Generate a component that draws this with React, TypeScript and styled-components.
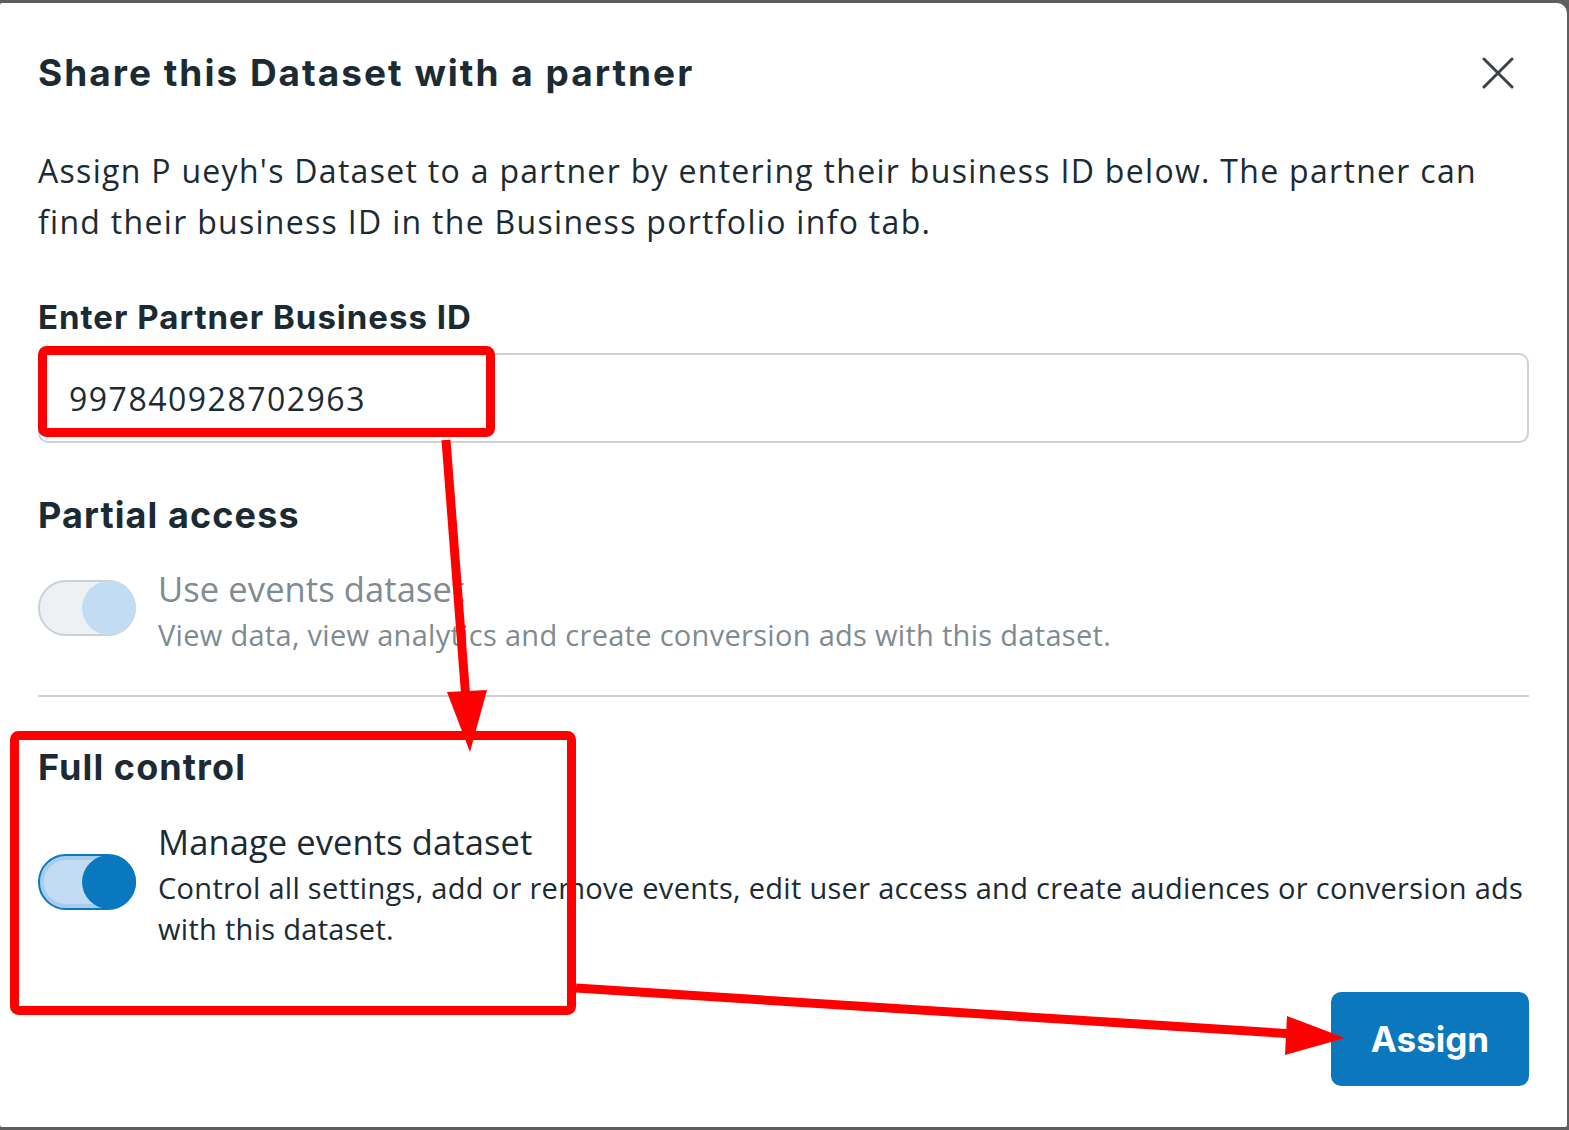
import styled, { createGlobalStyle } from "styled-components";

const GlobalStyle = createGlobalStyle`
    html, body {
        margin: 0;
        padding: 0;
        background: #4a4a4a;
    }
    * {
        box-sizing: border-box;
    }
`;

const Backdrop = styled.div`
    width: 1569px;
    height: 1130px;
    padding-top: 3px;
    background: #5e5e5e;
    overflow: hidden;
`;

const Modal = styled.div`
    position: relative;
    width: 1567px;
    height: 1124px;
    background: #ffffff;
    border-radius: 2px 10px 2px 2px;
    padding: 48px 38px 0 38px;
    color: #1c2b33;
    font-family: "Open Sans", "Noto Sans", sans-serif;
`;

const Header = styled.div`
    display: flex;
    align-items: center;
    justify-content: space-between;
    height: 44px;
`;

const Title = styled.h1`
    margin: 0;
    font-family: Inter, Roboto, sans-serif;
    font-weight: 700;
    font-size: 37px;
    line-height: 44px;
    letter-spacing: 2px;
`;

const CloseButton = styled.button`
    display: flex;
    align-items: center;
    justify-content: center;
    width: 48px;
    height: 48px;
    margin-right: 7px;
    padding: 0;
    border: none;
    background: none;
`;

const Intro = styled.p`
    margin: 50px 0 0;
    font-size: 32px;
    line-height: 51px;
    letter-spacing: 1.3px;
`;

const Label = styled.div`
    margin-top: 48px;
    font-family: Inter, Roboto, sans-serif;
    font-weight: 700;
    font-size: 33px;
    line-height: 44px;
    letter-spacing: 1px;
`;

const Input = styled.div`
    margin-top: 14px;
    height: 90px;
    display: flex;
    align-items: center;
    padding-left: 29px;
    border: 2px solid #cbd2d9;
    border-radius: 10px;
    font-size: 32px;
    letter-spacing: 1.5px;
`;

const SectionTitle = styled.h2<{ $gap: number }>`
    margin: ${(p) => p.$gap}px 0 0;
    font-family: Inter, Roboto, sans-serif;
    font-weight: 700;
    font-size: 36px;
    line-height: 44px;
    letter-spacing: 1.1px;
`;

const OptionRow = styled.div<{ $gap: number }>`
    display: flex;
    align-items: center;
    gap: 22px;
    margin-top: ${(p) => p.$gap}px;
`;

const Track = styled.div<{ $on: boolean }>`
    flex: none;
    display: flex;
    justify-content: flex-end;
    align-items: center;
    width: 98px;
    height: 56px;
    border-radius: 28px;
    border: 2px solid ${(p) => (p.$on ? "#0a78be" : "#ccd0d5")};
    background: ${(p) => (p.$on ? "#c3dcf4" : "#eef1f4")};
    box-shadow: ${(p) => (p.$on ? "inset 0 0 0 4px #a7ccee" : "none")};
    margin-top: -6px;
`;

const Knob = styled.div<{ $on: boolean }>`
    width: 54px;
    height: 54px;
    margin-right: -2px;
    border-radius: 50%;
    background: ${(p) => (p.$on ? "#0a78be" : "#c2dcf4")};
`;

const OptionText = styled.div<{ $muted: boolean }>`
    color: ${(p) => (p.$muted ? "#7f8a91" : "#1c2b33")};
`;

const OptionName = styled.div`
    font-size: 34.5px;
    line-height: 44px;
    letter-spacing: 0.1px;
`;

const OptionDesc = styled.div`
    margin-top: 3px;
    font-size: 29px;
    line-height: 41px;
    letter-spacing: 0.3px;
`;

const Divider = styled.hr`
    margin: 40px 0 0;
    border: none;
    border-top: 2px solid #ccd0d5;
`;

const Footer = styled.div`
    display: flex;
    justify-content: flex-end;
    margin-top: 43px;
`;

const AssignButton = styled.button`
    width: 198px;
    height: 94px;
    border: none;
    border-radius: 10px;
    background: #0b78be;
    color: #ffffff;
    font-family: Inter, Roboto, sans-serif;
    font-weight: 700;
    font-size: 35px;
`;

const Annotations = styled.svg`
    position: absolute;
    left: 0;
    top: -3px;
    pointer-events: none;
`;

const CloseIcon = () => (
    <svg width="32" height="32" viewBox="0 0 32 32">
        <path d="M2 2 L30 30 M30 2 L2 30" stroke="#39434a" strokeWidth="3" strokeLinecap="round" />
    </svg>
);

const Markup = () => (
    <Annotations width="1569" height="1130" viewBox="0 0 1569 1130">
        <g fill="none" stroke="#ff0000" strokeWidth="9" strokeLinejoin="round">
            <rect x="42.5" y="350.5" width="448" height="82" rx="4" />
            <rect x="14.5" y="735.5" width="557" height="275" rx="4" />
        </g>
        <g stroke="#ff0000" strokeWidth="9">
            <line x1="446" y1="440" x2="466" y2="700" />
            <line x1="576" y1="988" x2="1295" y2="1034" />
        </g>
        <g fill="#ff0000">
            <polygon points="447,692 487,690 470,752" />
            <polygon points="1287,1016 1345,1038 1285,1055" />
        </g>
    </Annotations>
);

export default function App() {
    return (
        <Backdrop>
            <GlobalStyle />
            <Modal>
                <Header>
                    <Title>Share this Dataset with a partner</Title>
                    <CloseButton aria-label="Close">
                        <CloseIcon />
                    </CloseButton>
                </Header>
                <Intro>
                    Assign P ueyh's Dataset to a partner by entering their business ID below. The partner can find
                    their business ID in the Business portfolio info tab.
                </Intro>
                <Label>Enter Partner Business ID</Label>
                <Input>997840928702963</Input>

                <SectionTitle $gap={50}>Partial access</SectionTitle>
                <OptionRow $gap={30}>
                    <Track $on={false}>
                        <Knob $on={false} />
                    </Track>
                    <OptionText $muted>
                        <OptionName>Use events dataset</OptionName>
                        <OptionDesc>View data, view analytics and create conversion ads with this dataset.</OptionDesc>
                    </OptionText>
                </OptionRow>
                <Divider />

                <SectionTitle $gap={48}>Full control</SectionTitle>
                <OptionRow $gap={31}>
                    <Track $on>
                        <Knob $on />
                    </Track>
                    <OptionText $muted={false}>
                        <OptionName>Manage events dataset</OptionName>
                        <OptionDesc>
                            Control all settings, add or remove events, edit user access and create audiences or
                            conversion ads with this dataset.
                        </OptionDesc>
                    </OptionText>
                </OptionRow>

                <Footer>
                    <AssignButton>Assign</AssignButton>
                </Footer>
                <Markup />
            </Modal>
        </Backdrop>
    );
}
